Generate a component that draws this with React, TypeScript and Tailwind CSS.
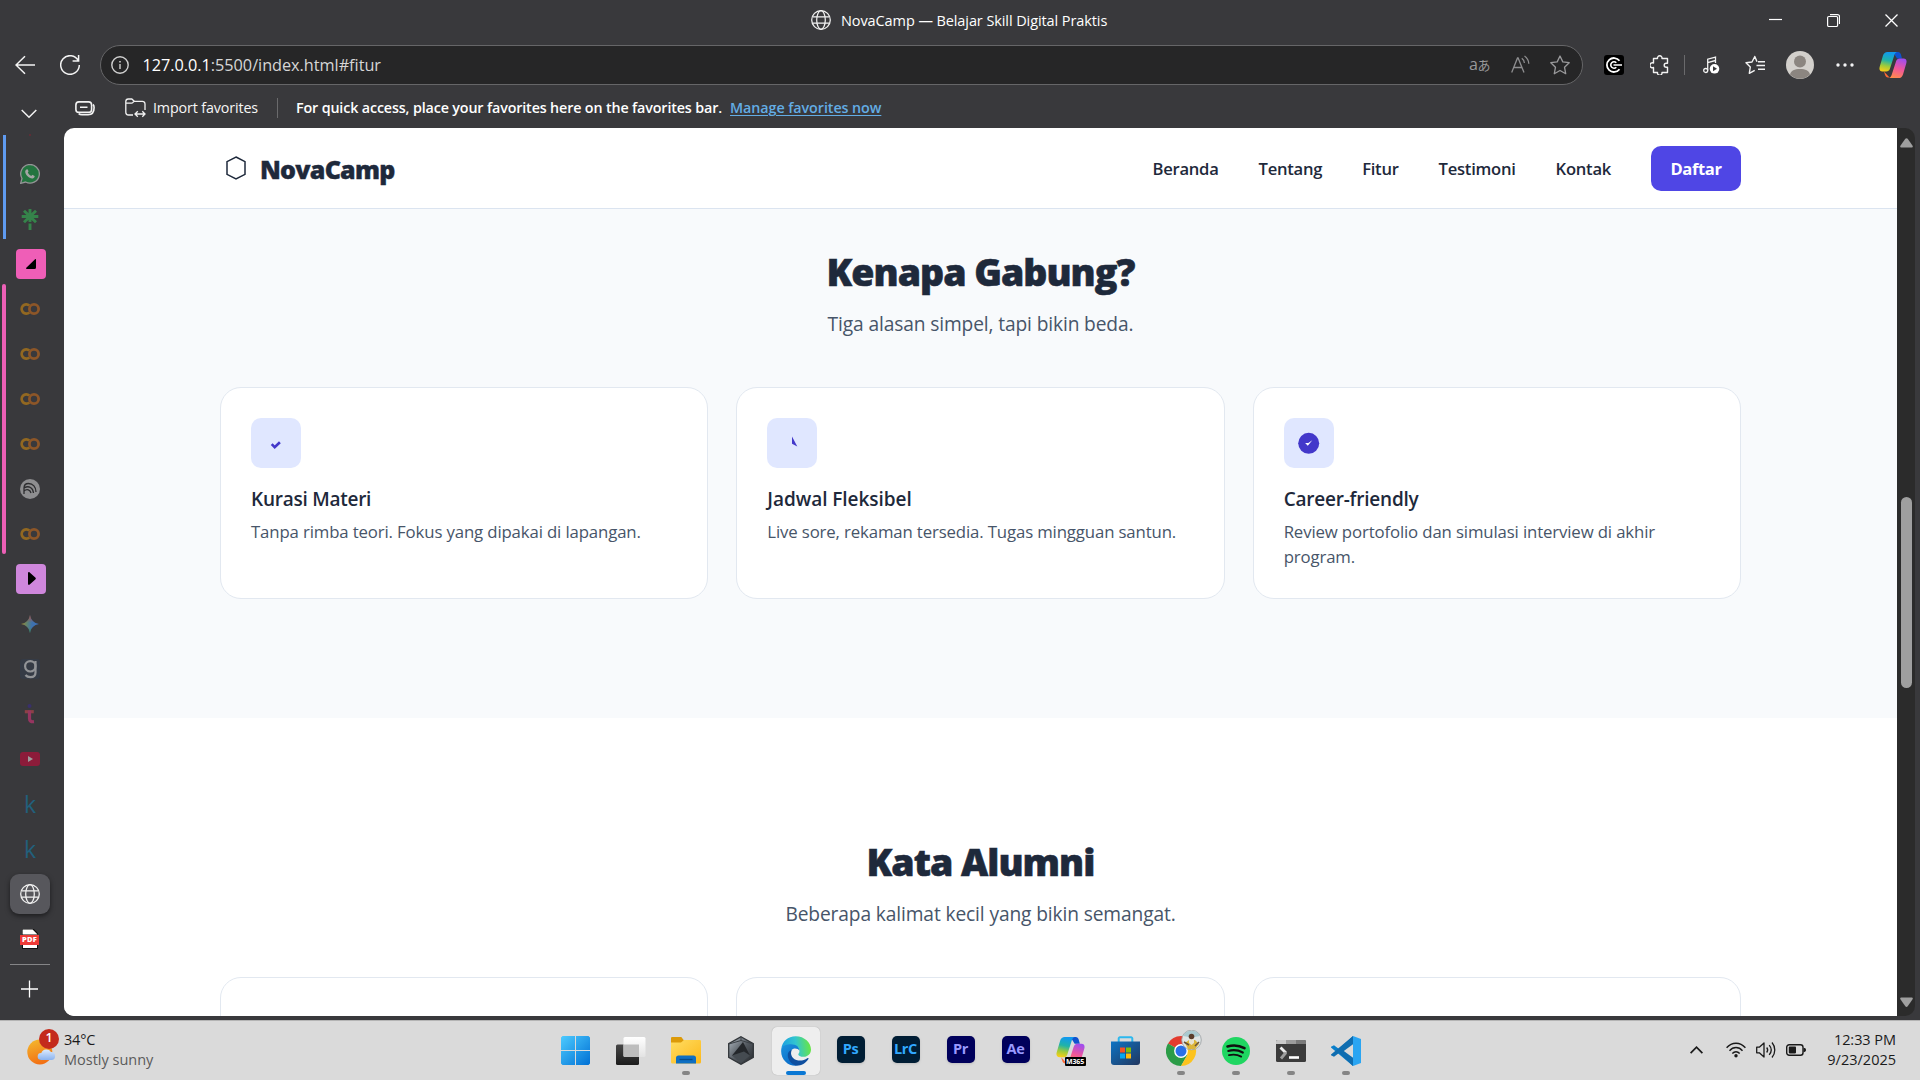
import React from 'react';
import type { ReactNode } from 'react';

function Globe({ size = 20, color = '#f2f2f2' }: { size?: number; color?: string }) {
  return (
    <svg width={size} height={size} viewBox="0 0 20 20" fill="none" stroke={color} strokeWidth="1.25">
      <circle cx="10" cy="10" r="9.3" />
      <ellipse cx="10" cy="10" rx="4.3" ry="9.3" />
      <path d="M1.6 6.8h16.8M1.6 13.2h16.8" />
    </svg>
  );
}

function CopilotMark({ id, size }: { id: string; size: number }) {
  return (
    <svg width={size} height={size} viewBox="0 0 28 28">
      <defs>
        <linearGradient id={id + 'a'} x1="0.4" y1="0" x2="0.2" y2="1">
          <stop offset="0" stopColor="#1199ee" />
          <stop offset="0.4" stopColor="#20b3a8" />
          <stop offset="0.7" stopColor="#9fcb3a" />
          <stop offset="1" stopColor="#ffcf14" />
        </linearGradient>
        <linearGradient id={id + 'b'} x1="0.6" y1="0" x2="0.3" y2="1">
          <stop offset="0" stopColor="#a24dec" />
          <stop offset="0.5" stopColor="#f0569a" />
          <stop offset="1" stopColor="#ff8a4c" />
        </linearGradient>
      </defs>
      <path d="M14 1h5c1.6 0 2.4.9 2.9 2.4L23 7.5h-5z" fill="#0f52cf" />
      <path d="M5 20.5l5.5 6H9c-1.600 0-2.400-.9-2.900-2.400z" fill="#ff6a35" />
      <path d="M8.500 1H18c-1.500.4-2.200 1.600-2.700 3.200L11 17.500c-.8 2.200-1.800 3-3.800 3H3.500C.9 20.500-.1 18.500.7 15.700L4 4.600C4.800 2.200 6.200 1 8.500 1z" fill={`url(#${id}a)`} />
      <path d="M19.500 27H10c1.500-.4 2.200-1.600 2.700-3.200L17 10.500c.8-2.200 1.800-3 3.800-3h3.700c2.600 0 3.600 2 2.800 4.800L24 23.400c-.8 2.400-2.200 3.600-4.500 3.600z" fill={`url(#${id}b)`} />
    </svg>
  );
}

function TitleBar() {
  return (
    <div className="flex h-10 shrink-0 items-center">
      <div className="ml-[811px] flex items-center gap-[10px]">
        <Globe />
        <span className="w-[840px] pt-px text-[14.5px] tracking-[-0.09px] text-white">NovaCamp — Belajar Skill Digital Praktis</span>
      </div>
      <div className="ml-[88px] flex items-center gap-[45px]">
        <svg width="13" height="13" viewBox="0 0 13 13" stroke="#fff" strokeWidth="1.2"><path d="M0 5.500h13" /></svg>
        <svg width="13" height="13" viewBox="0 0 13 13" fill="none" stroke="#fff" strokeWidth="1.200"><rect x=".6" y="2.500" width="10" height="10" rx="1.200" /><path d="M3 .6h7.500a2 2 0 0 1 2 2V10" /></svg>
        <svg width="13" height="13" viewBox="0 0 13 13" stroke="#fff" strokeWidth="1.300"><path d="M.5.500l12 12M12.500.5l-12 12" /></svg>
      </div>
    </div>
  );
}

function Toolbar() {
  return (
    <div className="flex h-[50px] shrink-0 items-center">
      <svg className="ml-[15px]" width="20" height="20" viewBox="0 0 20 20" fill="none" stroke="#f4f4f4" strokeWidth="1.500"><path d="M20 10H1M10 1.300L1 10l9 8.700" /></svg>
      <svg className="ml-[25px]" width="20" height="20" viewBox="0 0 20 20" fill="none" stroke="#f4f4f4" strokeWidth="1.500"><path d="M18.300 5.800A9.300 9.300 0 1 0 19.300 10M18.600 0v6h-6" /></svg>
      <div className="ml-5 flex h-10 w-[1483px] items-center rounded-full border border-[#666668] bg-[#262627] pl-[10px]">
        <svg width="18" height="18" viewBox="0 0 18 18" fill="none" stroke="#d0d0d0" strokeWidth="1.400"><circle cx="9" cy="9" r="8.200" /><path d="M9 8v5" /><path d="M9 5v1.600" strokeWidth="1.600" /></svg>
        <span className="ml-[13.5px] flex-1 text-[16.3px] tracking-[-0.04px] text-[#d6d6d6]"><span className="text-white">127.0.0.1</span>:5500/index.html#fitur</span>
        <div className="mr-[12px] flex items-center">
          <span className="mb-[2px] w-[42px] text-[16px] tracking-[-0.5px] whitespace-nowrap text-[#98989a]">a<span className="text-[13px]">あ</span></span>
          <svg width="20" height="20" viewBox="0 0 20 20" fill="none" stroke="#8e8e90" strokeWidth="1.300"><path d="M.7 17.500L6.500 3h.6L13 17.500M3 12.500h7.600M10.800 3.200c1.700 1.200 2.600 2.900 2.600 4.900M13.500 1c2.700 1.900 4.200 4.500 4.300 7.800" /></svg>
          <svg className="ml-[19px]" width="20" height="20" viewBox="0 0 20 20" fill="none" stroke="#9a9a9c" strokeWidth="1.300" strokeLinejoin="round"><path d="M10 1l2.800 5.900 6.400.8-4.700 4.500 1.200 6.500-5.700-3.200-5.700 3.200 1.200-6.500L.8 7.700l6.400-.8z" /></svg>
        </div>
      </div>
      <svg className="ml-[21px]" width="20" height="20" viewBox="0 0 20 20" fill="none" stroke="#fff"><rect width="20" height="20" rx="3" fill="#000" stroke="none" /><path d="M15.500 5.800A7 7 0 1 0 15.500 14.200" strokeWidth="1.800" /><path d="M12.300 7.800a3.200 3.200 0 1 0 0 4.400M9.500 10H18" strokeWidth="1.600" /></svg>
      <svg className="ml-[26px]" width="20" height="20" viewBox="0 0 20 20" fill="none" stroke="#f2f2f2" strokeWidth="1.400" strokeLinejoin="round"><path d="M3.500 3.500h4a2.300 2.300 0 1 1 4.500 0h5.500v4.700h-1.300a2 2 0 0 0 0 4h1.300v5.300H12a2.300 2.300 0 1 1-4.500 0h-4v-5a2.500 2.500 0 1 1 0-4.500z" /></svg>
      <div className="ml-[14px] h-5 w-px bg-[#6a6a6c]" />
      <svg className="ml-[18px]" width="18" height="20" viewBox="0 0 18 20" fill="none" stroke="#f2f2f2" strokeWidth="1.300"><path d="M4.700 15.500V4.200L12.500 2v6M4.700 7.700l7.800-2.200" /><circle cx="2.700" cy="15.500" r="2" /><circle cx="11.500" cy="13.800" r="4.800" fill="#fff" stroke="none" /><path d="M10 11.300l4 2.500-4 2.500z" fill="#39393c" stroke="none" /></svg>
      <svg className="ml-6" width="20" height="20" viewBox="0 0 20 20" fill="none" stroke="#f2f2f2" strokeWidth="1.400" strokeLinejoin="round"><path d="M12 6.700L9.800 1.500 7 7 1 7.700l4.300 4.300-1 6.400 5.400-3M13 6.800h7M11.500 10.500H20M13 14.300h7" /></svg>
      <svg className="ml-[21px]" width="28" height="28" viewBox="0 0 28 28"><circle cx="14" cy="14" r="14" fill="#d3d0cc" /><circle cx="14" cy="10.500" r="6" fill="#8b8580" /><path d="M4 23.500c1-4 4.500-5.500 10-5.500s9 1.500 10 5.500a14 14 0 0 1-20 0z" fill="#8b8580" /></svg>
      <svg className="ml-[22px]" width="18" height="4" viewBox="0 0 18 4" fill="#f4f4f4"><circle cx="2" cy="2" r="1.700" /><circle cx="9" cy="2" r="1.700" /><circle cx="16" cy="2" r="1.700" /></svg>
      <div className="ml-[25px]"><CopilotMark id="cp" size={28} /></div>
    </div>
  );
}

function FavoritesBar() {
  return (
    <div className="flex h-[38px] shrink-0 items-center pb-[2px] text-[14.3px]">
      <svg className="ml-[75px]" width="20" height="15" viewBox="0 0 20 15" fill="none" stroke="#f2f2f2" strokeWidth="1.600"><rect x=".9" y=".9" width="15.700" height="10.500" rx="3" /><path d="M5 6.200h7.500M18 3.500c.9.700 1.100 1.500 1.100 3 0 5-1.600 7.200-6 7.200H7c-1.500 0-2.500-.3-3.300-1.100" /></svg>
      <svg className="ml-[30px]" width="21" height="20" viewBox="0 0 21 20" fill="none" stroke="#f2f2f2" strokeWidth="1.300"><path d="M8 17H3.500A2.700 2.700 0 0 1 .8 14.300V3.400A2.500 2.500 0 0 1 3.300 1h3.500l2.500 2.300h8A2.600 2.600 0 0 1 20 5.900v6M.8 5.200h5.700c1.500 0 1.800-1.900 2.800-1.900M10.500 16h9M12.800 13.300L10 16l2.800 2.700M17.300 13.300L20 16l-2.700 2.700" /></svg>
      <span className="ml-[7px] w-[124px] tracking-[-0.13px] text-[#f6f6f6]">Import favorites</span>
      <div className="h-5 w-px bg-[#6a6a6c]" />
      <span className="ml-[18px] w-[434px] font-semibold tracking-[-0.14px] whitespace-nowrap text-white">For quick access, place your favorites here on the favorites bar.</span>
      <span className="font-semibold tracking-[-0.07px] text-[#63ade5] underline underline-offset-2">Manage favorites now</span>
    </div>
  );
}

const Colab = () => (
  <svg width="20" height="12" viewBox="0 0 20 12" fill="none" strokeWidth="2.800">
    <path d="M9.300 2.500A4.600 4.600 0 1 0 9.300 9.500" stroke="#926821" />
    <circle cx="14" cy="6" r="4.600" stroke="#8d5628" />
  </svg>
);

const Kaggle = () => <span className="pt-px text-[23px] leading-none font-medium text-[#22607c]">k</span>;

const tabs: ReactNode[] = [
  <svg width="20" height="20" viewBox="0 0 20 20">
    <path d="M.6 19.400L2 14.500A9.300 9.300 0 1 1 5.600 18z" fill="#23743f" stroke="#949496" strokeWidth="1.300" />
    <path d="M6.500 5.500c.8-.6 1.200-.3 1.500.5l.5 1.300c.1.500-.6 1-.7 1.300.7 1.600 1.800 2.600 3.500 3.300.5-.2.900-1.200 1.400-1l1.900 1c.4.600-.3 2.200-1.900 2.500-3.300.5-7.800-4-7.500-7 .1-.8.600-1.500 1.300-1.900z" fill="#a5a5a5" />
  </svg>,
  <svg width="18" height="22" viewBox="0 0 18 22" stroke="#35834a" strokeWidth="2.900"><path d="M9 1v13M.7 8.500h16.600M3 2.700l12 11.500M15 2.700L3 14.200M9 15.500V22" /></svg>,
  <div className="ml-[2px] flex h-[30px] w-[30px] items-center justify-center rounded-[4px] bg-[#ef5eb7]">
    <svg width="10" height="10" viewBox="0 0 10 10"><path d="M8.800.400c.7-.7 1.200-.3 1.200.5V8.500A1.500 1.500 0 0 1 8.500 10H1C0 10-.3 9.400.3 8.800z" /></svg>
  </div>,
  <Colab />, <Colab />, <Colab />, <Colab />,
  <svg width="20" height="20" viewBox="0 0 20 20" fill="none" stroke="#2d2d2f" strokeWidth="1.300"><circle cx="10" cy="10" r="10" fill="#8e8e90" stroke="none" /><path d="M4 15V9c0-3 2-4.500 4.500-4.500C13 4.500 16 8 16 13M4 9c5-3 9 0 9.500 5M4 12c3-2.800 6.300-1 7 2" /></svg>,
  <Colab />,
  <div className="ml-[2px] flex h-[30px] w-[30px] items-center justify-center rounded-[4px] bg-[#cf87dc]">
    <svg className="ml-[2px]" width="8" height="13" viewBox="0 0 8 13"><path d="M0 1.200C0 0 .9-.3 1.700.500L7.300 5.500c.7.600.7 1.400 0 2L1.700 12.500c-.8.800-1.700.5-1.700-.7z" /></svg>
  </div>,
  <svg width="18" height="18" viewBox="0 0 18 18">
    <defs><linearGradient id="gm" x1="0" y1=".45" x2="1" y2=".55"><stop offset="0" stopColor="#a08a30" /><stop offset=".35" stopColor="#5c8272" /><stop offset=".6" stopColor="#3f72ac" /><stop offset="1" stopColor="#3b6fc0" /></linearGradient>
    <linearGradient id="gm2" x1="0" y1="0" x2="0" y2="1"><stop offset="0" stopColor="#b04a46" /><stop offset=".42" stopColor="#a84a46" stopOpacity="0" /><stop offset=".7" stopColor="#378a4c" stopOpacity="0" /><stop offset="1" stopColor="#378a4c" /></linearGradient></defs>
    <path d="M9 0c.8 5 4 8.200 9 9-5 .8-8.200 4-9 9-.8-5-4-8.200-9-9 5-.8 8.200-4 9-9z" fill="url(#gm)" />
    <path d="M9 0c.8 5 4 8.200 9 9-5 .8-8.200 4-9 9-.8-5-4-8.200-9-9 5-.8 8.200-4 9-9z" fill="url(#gm2)" />
  </svg>,
  <svg width="20" height="20" viewBox="0 0 20 20" fill="none"><rect width="20" height="20" rx="3" fill="#353b46" /><path d="M15.500 2v11.500c0 3-2 4.700-5 4.700-2.500 0-4-.8-5-2.200" stroke="#929498" strokeWidth="2.200" /><circle cx="10.300" cy="7.300" r="5.200" stroke="#929498" strokeWidth="2.200" /></svg>,
  <svg width="12" height="20" viewBox="0 0 12 20" fill="none" stroke="#963560" strokeWidth="3.200"><circle cx="5.500" cy="2" r="2" fill="#39306b" stroke="none" /><path d="M.8 7.700h9" stroke="#8c4146" /><path d="M5.500 6.500v8c0 2.500 1.300 3.500 4.500 3.200" /></svg>,
  <svg width="20" height="14" viewBox="0 0 20 14"><rect width="20" height="14" rx="3" fill="#8c1c3a" /><path d="M8 4l5 3-5 3z" fill="#9c9c9c" /></svg>,
  <Kaggle />, <Kaggle />,
  <div className="flex h-10 w-10 items-center justify-center rounded-[9px] bg-[#57575c] shadow-[0_2px_5px_rgba(0,0,0,0.5)]"><Globe /></div>,
  <div className="mr-px flex w-[19px] flex-col items-center">
    <svg width="16" height="6" viewBox="0 0 16 6"><path d="M0 6V0h11l5 5v1z" fill="#fff" stroke="#111" strokeWidth="1.200" /></svg>
    <span className="flex h-[10px] w-full items-center justify-center bg-[#ee3a37] text-[7.500px] leading-none font-extrabold tracking-[0.3px] text-white">PDF</span>
    <div className="h-[4px] w-[16px] border border-t-0 border-[#111] bg-white" />
  </div>,
];

function Sidebar() {
  return (
    <div className="flex w-16 shrink-0">
      <div className="flex w-[10px] shrink-0 flex-col pl-[2px]">
        <div className="mt-[7px] ml-px h-[104px] w-[3px] bg-[#5f9bf0]" />
        <div className="mt-[45px] h-[270px] w-[4px] rounded-full bg-[#ec60b6]" />
      </div>
      <div className="flex w-10 shrink-0 flex-col items-center">
        <div className="h-[23px] shrink-0 pt-[6px]"><div className="h-[2px] w-[2px] rounded-full bg-[#682b35]" /></div>
        {tabs.map((t, i) => (
          <div key={i} className="flex h-[45px] shrink-0 items-center justify-center">{t}</div>
        ))}
        <div className="mt-[3px] h-px w-10 shrink-0 bg-[#858587]" />
        <svg className="mt-[15px] shrink-0" width="18" height="18" viewBox="0 0 18 18" stroke="#fff" strokeWidth="1.300"><path d="M0 9h17M8.500 .5v17" /></svg>
      </div>
    </div>
  );
}

const icons: ReactNode[] = [
  <svg width="50" height="50" viewBox="0 0 50 50" fill="none"><path d="M20.700 26.200l3 3 5.200-5" stroke="#4338ca" strokeWidth="2.600" /></svg>,
  <svg width="50" height="50" viewBox="0 0 50 50"><path d="M25 18.500l5.300 10L25 25.800z" fill="#4338ca" /></svg>,
  <svg width="50" height="50" viewBox="0 0 50 50"><circle cx="24.700" cy="25.300" r="10.500" fill="#4338ca" /><path d="M28.300 22.300l-4.500 5.400-2.700-2.700 3.200-.1z" fill="#fff" /></svg>,
];

const features = [
  { title: 'Kurasi Materi', cls: 'tracking-[-0.25px]', text: 'Tanpa rimba teori. Fokus yang dipakai di lapangan.' },
  { title: 'Jadwal Fleksibel', cls: 'tracking-[-0.05px]', text: 'Live sore, rekaman tersedia. Tugas mingguan santun.' },
  { title: 'Career-friendly', cls: 'tracking-[-0.22px]', text: 'Review portofolio dan simulasi interview di akhir program.' },
];

function Heading({ title, sub }: { title: string; sub: string }) {
  return (
    <div className="text-center">
      <h2 className="h-[50px] text-[37.500px] leading-[50px] font-extrabold tracking-[-1px] text-[#1e293b] [-webkit-text-stroke:0.6px_#1e293b]">{title}</h2>
      <p className="mt-3 h-[30px] text-[19.200px] leading-[30px] tracking-[-0.13px] text-[#475569]">{sub}</p>
    </div>
  );
}

function WebPage() {
  return (
    <div className="flex w-[1833px] flex-col overflow-hidden rounded-l-[10px] bg-white">
      <header className="flex h-[81px] shrink-0 items-center justify-between border-b border-[#dbe4f0] px-[156px] pl-[162px]">
        <div className="flex items-center">
          <svg className="mb-px" width="20" height="24" viewBox="0 0 20 24" fill="none" stroke="#1e293b" strokeWidth="1.500"><path d="M10 1l9 4.700v12.600L10 23l-9-4.700V5.700z" /></svg>
          <span className="ml-[14px] pt-[3px] text-[25px] font-extrabold tracking-[-0.75px] text-[#1e293b] [-webkit-text-stroke:0.4px_#1e293b]">NovaCamp</span>
        </div>
        <nav className="flex items-center gap-10 text-[16.600px] font-semibold tracking-[-0.26px] text-[#1e293b]">
          <a className="pt-[3px]">Beranda</a>
          <a className="pt-[3px]">Tentang</a>
          <a className="pt-[3px]">Fitur</a>
          <a className="pt-[3px]">Testimoni</a>
          <a className="pt-[3px]">Kontak</a>
          <a className="flex h-[45px] w-[90px] items-center justify-center rounded-[10px] bg-[#4f46e5] pt-[3px] font-bold tracking-[-0.4px] text-white">Daftar</a>
        </nav>
      </header>
      <section className="h-[509px] shrink-0 bg-[#f8fafc] px-[156px] pt-[38px]">
        <Heading title="Kenapa Gabung?" sub="Tiga alasan simpel, tapi bikin beda." />
        <div className="mt-12 grid grid-cols-3 gap-7">
          {features.map((f, i) => (
            <div key={f.title} className="h-[212px] rounded-[21px] border border-[#e2e8f0] bg-white px-[30px] pt-[30px]">
              <div className="h-[50px] w-[50px] rounded-[10px] bg-[#e0e7ff]">{icons[i]}</div>
              <h3 className={'mt-[17px] h-7 text-[19px] leading-7 font-semibold text-[#1e293b] ' + f.cls}>{f.title}</h3>
              <p className="mt-[6px] text-[16.800px] leading-[25px] tracking-[-0.14px] text-[#475569]">{f.text}</p>
            </div>
          ))}
        </div>
      </section>
      <section className="flex-1 bg-white px-[156px] pt-[119px]">
        <Heading title="Kata Alumni" sub="Beberapa kalimat kecil yang bikin semangat." />
        <div className="mt-12 grid grid-cols-3 gap-7">
          {features.map((f) => (
            <div key={f.title} className="h-[60px] rounded-t-[21px] border border-[#e2e8f0] bg-white" />
          ))}
        </div>
      </section>
    </div>
  );
}

function Scrollbar() {
  return (
    <div className="flex w-[18px] flex-col items-center rounded-r-[10px] bg-[#2b2b2b]">
      <svg className="mt-[10px]" width="13" height="10" viewBox="0 0 13 10" fill="#9f9f9f"><path d="M5.300.8c.7-.9 1.700-.9 2.400 0L12.600 7.800c.5.900.2 1.700-.8 1.700H1.200C.2 9.500-.1 8.700.4 7.800z" /></svg>
      <div className="mt-[349px] h-[191px] w-[11px] rounded-full bg-[#9f9f9f]" />
      <div className="flex-1" />
      <svg className="mb-[9px] rotate-180" width="13" height="10" viewBox="0 0 13 10" fill="#9f9f9f"><path d="M5.300.8c.7-.9 1.700-.9 2.400 0L12.600 7.800c.5.900.2 1.700-.8 1.700H1.200C.2 9.500-.1 8.700.4 7.800z" /></svg>
    </div>
  );
}

function Adobe({ label, cls }: { label: string; cls: string }) {
  return <div className={'mb-[2px] flex h-[27px] w-7 items-center justify-center rounded-[5px] pb-px text-[14.500px] leading-none font-bold tracking-[-0.4px] shadow ' + cls}>{label}</div>;
}

const apps: { icon: ReactNode; dot?: boolean; active?: boolean }[] = [
  { icon: (
    <svg className="mr-px" width="29" height="29" viewBox="0 0 29 29"><defs><linearGradient id="win" x1="0" y1="0" x2="1" y2="1"><stop offset="0" stopColor="#4dcbff" /><stop offset="1" stopColor="#0070d4" /></linearGradient></defs>
      <path d="M1.500 0H14v14H0V1.500zM15 0h12.500L29 1.500V14H15zM0 15h14v14H1.500L0 27.500zM15 15h14v12.500L27.500 29H15z" fill="url(#win)" /></svg>) },
  { icon: (
    <svg width="30" height="28" viewBox="0 0 30 28"><defs><linearGradient id="tv" x1="0" y1="0" x2="0" y2="1"><stop offset="0" stopColor="#464646" /><stop offset="1" stopColor="#1c1c1c" /></linearGradient><linearGradient id="tw" x1="0" y1="0" x2="0" y2="1"><stop offset="0" stopColor="#fff" /><stop offset="1" stopColor="#e3e3e3" /></linearGradient></defs>
      <rect y="7.500" width="23" height="20.500" rx="1.500" fill="url(#tv)" /><rect x="7.500" width="22" height="20" rx="1.500" fill="url(#tw)" /><path d="M7.500 7.500H23V20H9a1.500 1.500 0 0 1-1.500-1.500z" fill="#bdbdbd" /></svg>) },
  { dot: true, icon: (
    <svg width="30" height="27" viewBox="0 0 30 27"><defs><linearGradient id="fo" x1="0" y1="0" x2="1" y2="1"><stop offset="0" stopColor="#ffdd62" /><stop offset="1" stopColor="#fcb81a" /></linearGradient></defs>
      <path d="M0 1.500A1.300 1.300 0 0 1 1.300 0h9l2.700 3.500V8H0z" fill="#dc9a09" /><path d="M0 5.500h10l3-2.500h15.700A1.300 1.300 0 0 1 30 4.300V25a1.500 1.500 0 0 1-1.500 1.500h-27A1.500 1.500 0 0 1 0 25z" fill="url(#fo)" /><path d="M5 26.500V21a2.500 2.500 0 0 1 2.500-2.500h15A2.500 2.500 0 0 1 25 21v5.500z" fill="#0f6fc2" /><path d="M8.500 22.500h13" stroke="#064b8a" strokeWidth="1.300" /></svg>) },
  { icon: (
    <svg width="26" height="29" viewBox="0 0 26 29"><defs><linearGradient id="hx" x1="0" y1="0" x2="1" y2="1"><stop offset="0" stopColor="#b4bdc5" /><stop offset=".5" stopColor="#545a61" /><stop offset="1" stopColor="#24272b" /></linearGradient></defs>
      <path d="M13 .7l12.300 7v13.600L13 28.300.7 21.300V7.700z" fill="url(#hx)" stroke="#303438" strokeWidth="1.300" /><path d="M1 8l12-3.500L25 8M13 4.500V1" stroke="#3c4146" fill="none" /><path d="M15 6l7 13.500L13 23 4 19.500z" fill="#24272b" /><path d="M4 19.500l12-4 6 4L13 27z" fill="#454b51" /></svg>) },
  { active: true, icon: (
    <svg width="30" height="30" viewBox="0 0 30 30"><defs><linearGradient id="e1" x1="0" y1=".5" x2="1" y2=".4"><stop offset="0" stopColor="#1b9de2" /><stop offset=".5" stopColor="#32c5d0" /><stop offset="1" stopColor="#6ae83e" /></linearGradient><linearGradient id="e2" x1="0" y1="0" x2=".6" y2="1"><stop offset="0" stopColor="#1c92dd" /><stop offset="1" stopColor="#0a6bc8" /></linearGradient></defs>
      <path d="M.3 13C1.200 5.300 7 .2 14.700.2 23.500.2 30 6.600 30 13.500c0 4.300-3.200 7.300-7.300 7.300-3.500 0-5.400-1.300-5.400-2.400 0-.8 1.200-1.100 1.200-3.600 0-3-2.800-5-6.500-5C6 9.800 2 11 .3 13z" fill="url(#e1)" />
      <path d="M.3 13C2 9 6 8.200 10 8.200c5 0 8.500 2.800 8.500 6.500-1.500-2.500-6-3.300-8.200-.5-3.300 4.200-.5 11.500 5.500 15.500-9.300.7-16.800-7.200-15.500-16.700z" fill="url(#e2)" />
      <path d="M10.800 14c-2.300 4.300.8 10 6.500 10.500 3.800.4 6.500-.7 9-2.300.8-.5 1.600.1 1.100.9-2.600 4.200-7 6.700-11.600 6.700-6-1.300-9.500-7-9-11.500.3-2.200 1.800-3.900 4-4.300z" fill="#0f4f9f" /></svg>) },
  { icon: <Adobe label="Ps" cls="bg-[#001d34] text-[#31a8ff]" /> },
  { icon: <Adobe label="LrC" cls="bg-[#001d34] text-[#31a8ff]" /> },
  { icon: <Adobe label="Pr" cls="bg-[#00005b] text-[#9999ff]" /> },
  { icon: <Adobe label="Ae" cls="bg-[#00005b] text-[#9999ff]" /> },
  { icon: (
    <div className="flex h-[30px] w-[30px] flex-col items-end">
      <div className="h-[21px] w-[30px]"><CopilotMark id="cm" size={29} /></div>
      <span className="relative h-[9px] w-[21px] rounded-[1px] bg-black text-center text-[7px] leading-[9px] font-bold tracking-[-0.1px] text-white">M365</span>
    </div>) },
  { icon: (
    <svg width="29" height="30" viewBox="0 0 29 30"><defs><linearGradient id="st" x1="0" y1="0" x2="1" y2="1"><stop offset="0" stopColor="#0d74c4" /><stop offset="1" stopColor="#22375f" /></linearGradient></defs>
      <path d="M7.700 7V2.500A1.200 1.200 0 0 1 9 1.300h11a1.200 1.200 0 0 1 1.300 1.200V7" fill="none" stroke="#2cb8ee" strokeWidth="2" /><path d="M0 5.500h29V26a3 3 0 0 1-3 3H3a3 3 0 0 1-3-3z" fill="url(#st)" /><path d="M9 11.500h5v5H9z" fill="#f35325" /><path d="M15 11.500h5v5h-5z" fill="#81bc06" /><path d="M9 17.500h5v5H9z" fill="#05a6f0" /><path d="M15 17.500h5v5h-5z" fill="#ffba08" /></svg>) },
  { dot: true, icon: (
    <svg className="mb-[5px] ml-[6px]" width="36" height="36" viewBox="0 0 36 36"><path d="M15 21L2 13.500A15 15 0 0 1 28 13.500z" fill="#e33b2e" /><path d="M15 21L2 13.500A15 15 0 0 0 15 36l6.500-11.300z" fill="#2b9c47" /><path d="M15 21l13-7.500A15 15 0 0 1 15 36l6.500-11.300z" fill="#fcc31e" /><circle cx="15" cy="21" r="6.900" fill="#fff" /><circle cx="15" cy="21" r="5.500" fill="#2a70e8" />
      <circle cx="25.500" cy="10" r="9.800" fill="#dfe4e4" stroke="#9aa0a2" strokeWidth=".8" /><path d="M17 6a9.500 9.500 0 0 1 17 0l-5 1h-6z" fill="#a9c9cf" /><path d="M19 13l4-3h6l4 4-4 5h-7z" fill="#dcb53b" /><path d="M23 9h5v4l-2.500 2L23 13z" fill="#e8e2d0" /><circle cx="25.500" cy="6.500" r="2.800" fill="#5a3d2b" /><path d="M18 12l5 3M33 12l-4 4" stroke="#67503a" strokeWidth="1.500" /></svg>) },
  { dot: true, icon: (
    <svg width="28" height="28" viewBox="0 0 28 28" fill="none" stroke="#101010" strokeLinecap="round"><circle cx="14" cy="14" r="14" fill="#1fd661" stroke="none" /><path d="M5.500 9.500c6-1.700 12-1 17 1.700" strokeWidth="2.600" /><path d="M6.300 14c5-1.400 10.200-.8 14.500 1.500" strokeWidth="2.200" /><path d="M7 18.200c4.200-1 8.500-.6 12.200 1.400" strokeWidth="1.800" /></svg>) },
  { dot: true, icon: (
    <svg width="30" height="22" viewBox="0 0 30 22"><rect width="30" height="22" rx="1.500" fill="#3b3b3b" /><path d="M0 4V1.500A1.500 1.500 0 0 1 1.500 0H10v4z" fill="#c9c9c9" /><path d="M10 0h10v4H10z" fill="#9c9c9c" /><path d="M20 0h8.500A1.500 1.500 0 0 1 30 1.500V4H20z" fill="#7a7a7a" /><path d="M4.500 7.500l5.500 5.500" stroke="#ececec" strokeWidth="2.800" /><path d="M10 12.500L5 18.500" stroke="#9e9e9e" strokeWidth="2.800" /><path d="M13 17.500h10" stroke="#fff" strokeWidth="2.600" /></svg>) },
  { dot: true, icon: (
    <svg width="30" height="30" viewBox="0 0 30 30"><path d="M22 0L8 13 3 9.300 0 10.700v.8L22 30z" fill="#0a7fca" /><path d="M22 30L8 17l-5 3.700L0 19.200v-.7L22 0z" fill="#0f6db0" /><path d="M22 8.300L12.800 15 22 21.700z" fill="#dadada" /><path d="M22 0l8 3v24l-8 3z" fill="#2aa5f2" /></svg>) },
];

function Taskbar() {
  return (
    <div className="flex h-[60px] shrink-0 items-center border-t border-[#b4b4b4] bg-[#dadada]">
      <div className="flex w-[548px] items-center pl-[27px]">
        <div className="relative h-[34px] w-[30px]">
          <svg className="mt-[5px]" width="30" height="27" viewBox="0 0 30 27"><defs><linearGradient id="su" x1=".3" y1="0" x2=".6" y2="1"><stop offset="0" stopColor="#f4b52c" /><stop offset="1" stopColor="#f26c12" /></linearGradient><linearGradient id="cl" x1="0" y1="0" x2="0" y2="1"><stop offset="0" stopColor="#dcebfd" /><stop offset="1" stopColor="#8ab2ef" /></linearGradient></defs><circle cx="12.800" cy="13" r="12.500" fill="url(#su)" /><path d="M14 21a3.500 3.500 0 0 1 .3-7A5.500 5.500 0 0 1 24 13a4 4 0 0 1 .2 8z" fill="url(#cl)" /></svg>
          <span className="absolute top-[-5px] left-[12px] flex h-5 w-5 items-center justify-center rounded-full bg-[#c42b1c] text-[12.500px] leading-none font-semibold text-white">1</span>
        </div>
        <div className="mb-[2px] ml-[7px] flex flex-col text-[14.500px] leading-5 text-[#1b1b1b]">
          <span className="tracking-[-0.2px]">34°C</span>
          <span className="text-[#5a5a5a]">Mostly sunny</span>
        </div>
      </div>
      <div className="flex">
        {apps.map((a, i) => (
          <div key={i} className="flex h-[60px] w-[55px] shrink-0 items-center justify-center">
            <div className={'relative flex h-12 w-12 items-center justify-center rounded-[5px] ' + (a.active ? 'bg-[#eeeeee] shadow-[0_0_1px_rgba(0,0,0,0.3)]' : '')}>
              {a.icon}
              {a.active && <div className="absolute bottom-0 left-[14px] h-[4px] w-5 rounded-full bg-[#0a78d4]" />}
              {a.dot && <div className="absolute bottom-0 left-5 h-[4px] w-2 rounded-full bg-[#858585]" />}
            </div>
          </div>
        ))}
      </div>
      <div className="ml-auto flex items-center pr-[24px] pb-px">
        <svg width="13" height="8" viewBox="0 0 13 8" fill="none" stroke="#1a1a1a" strokeWidth="1.700"><path d="M.6 7.200L6.500 1.200l5.900 6" /></svg>
        <svg className="ml-[23px]" width="20" height="16" viewBox="0 0 20 16" fill="none" stroke="#1a1a1a" strokeWidth="1.400"><path d="M.6 5.800c5.300-6 13.500-6 18.800 0M3.500 8.700c3.700-4.200 9.300-4.200 13 0M6.300 11.500c2.200-2.400 5.200-2.400 7.400 0" /><circle cx="10" cy="13.700" r="1.700" fill="#1a1a1a" stroke="none" /></svg>
        <svg className="ml-[10px]" width="20" height="18" viewBox="0 0 20 18" fill="none" stroke="#1a1a1a" strokeWidth="1.300" strokeLinejoin="round"><path d="M.7 6.200h2.600L8 2v14l-4.700-4.200H.7zM10.700 6.500c1.200 1.500 1.200 3.500 0 5M13.200 4.200c2.500 2.900 2.500 6.700 0 9.600M16 1.500c3.700 4.400 3.700 10.600 0 15" /></svg>
        <svg className="ml-[10px]" width="20" height="12" viewBox="0 0 20 12"><rect x=".7" y=".7" width="16.300" height="10.600" rx="2.500" fill="none" stroke="#1a1a1a" strokeWidth="1.400" /><rect x="2.800" y="2.600" width="7.200" height="6.800" rx=".8" fill="#1a1a1a" /><path d="M17.500 3.800c1.500 0 2.500.8 2.500 2.200s-1 2.200-2.500 2.200z" fill="#1a1a1a" /></svg>
        <div className="mb-px ml-[21px] flex flex-col text-right text-[14.500px] leading-5 text-[#1b1b1b]">
          <span className="tracking-[-0.05px]">12:33 PM</span>
          <span>9/23/2025</span>
        </div>
      </div>
    </div>
  );
}

export default function App() {
  return (
    <div className="flex h-[1080px] w-[1920px] flex-col overflow-hidden bg-[#39393c] font-['Open_Sans','Noto_Sans','Noto_Sans_CJK_JP',sans-serif]">
      <TitleBar />
      <Toolbar />
      <div className="relative">
        <FavoritesBar />
        <svg className="absolute top-[19px] left-[21px]" width="16" height="10" viewBox="0 0 16 10" fill="none" stroke="#f2f2f2" strokeWidth="1.500"><path d="M.7 1L8 8.300 15.300 1" /></svg>
      </div>
      <div className="flex h-[888px] shrink-0">
        <Sidebar />
        <WebPage />
        <Scrollbar />
      </div>
      <div className="h-[4px] shrink-0" />
      <Taskbar />
    </div>
  );
}
